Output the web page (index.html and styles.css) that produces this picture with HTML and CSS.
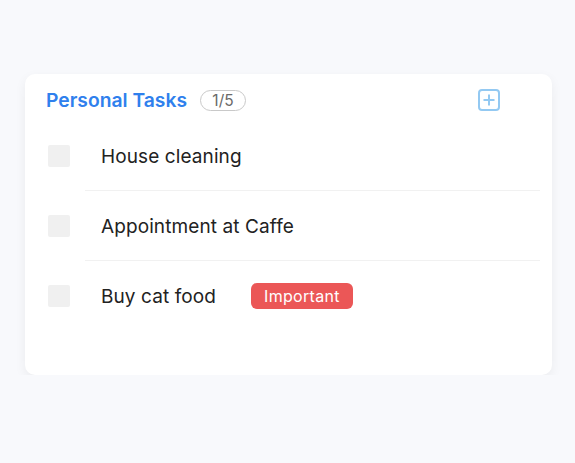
FILE: index.html
```html
<!DOCTYPE html>
<html>
<head>
<meta charset="utf-8">
<link rel="stylesheet" href="styles.css">
</head>
<body>
<div class="card">
  <div class="header">
    <span class="title">Personal Tasks</span>
    <span class="count">1/5</span>
    <span class="add">
      <svg width="22" height="22" viewBox="0 0 22 22"><rect x="1" y="1" width="20" height="20" rx="3" fill="none" stroke="#93c9f2" stroke-width="2"/><path d="M11 5.5V16.5M5.5 11H16.5" stroke="#93c9f2" stroke-width="2" fill="none"/></svg>
    </span>
  </div>
  <div class="row sep"><span class="box"></span><span class="label">House cleaning</span></div>
  <div class="row sep"><span class="box"></span><span class="label">Appointment at Caffe</span></div>
  <div class="row"><span class="box"></span><span class="label">Buy cat food</span><span class="tag">Important</span></div>
</div>
</body>
</html>
```
FILE: styles.css
```css
body {
  margin: 0;
  background: #f8f9fc;
  font-family: Inter, "Noto Sans", sans-serif;
}
.card {
  margin: 74px 0 0 25px;
  width: 527px;
  height: 301px;
  background: #fff;
  border-radius: 10px;
  box-shadow: 0 4px 12px rgba(0,0,0,0.06);
  box-sizing: border-box;
}
.header {
  display: flex;
  align-items: center;
  height: 20px;
  padding: 16px 52px 0 21px;
  margin-bottom: 11px;
}
.title {
  color: #2f80ed;
  font-weight: 600;
  font-size: 19.3px;
}
.count {
  margin-left: 13px;
  width: 46px;
  height: 21px;
  box-sizing: border-box;
  border: 1px solid #c9c9c9;
  border-radius: 11px;
  color: #6a6a6a;
  font-size: 15.5px;
  display: flex;
  align-items: center;
  justify-content: center;
}
.add {
  margin-left: auto;
  display: flex;
}
.row {
  height: 70px;
  display: flex;
  align-items: center;
  padding-left: 23px;
  position: relative;
}
.sep::after {
  content: "";
  position: absolute;
  left: 60px;
  right: 12px;
  bottom: 0;
  height: 1px;
  background: #f1f1f1;
}
.box {
  width: 22px;
  height: 22px;
  background: #f0f0f0;
  border-radius: 2px;
}
.label {
  margin-left: 31px;
  font-size: 19px;
  letter-spacing: 0.1px;
  color: #222;
}
.tag {
  margin-left: 35px;
  height: 26px;
  padding: 0 13px;
  background: #eb5757;
  color: #fff;
  font-size: 16px;
  letter-spacing: 0.3px;
  border-radius: 6px;
  display: flex;
  align-items: center;
}
```
